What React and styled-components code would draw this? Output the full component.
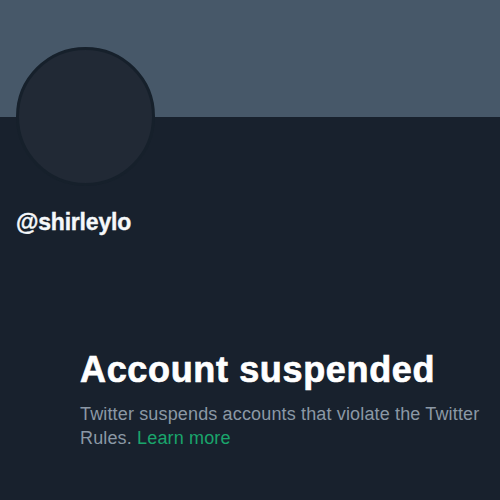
import React from "react";
import styled, { createGlobalStyle } from "styled-components";

const Global = createGlobalStyle`
  html, body { margin: 0; padding: 0; background: #18212d; }
  body { font-family: "Liberation Sans", Arial, sans-serif; }
`;

const Page = styled.div`
  width: 500px;
  height: 500px;
  background: #18212d;
  overflow: hidden;
  display: flex;
  flex-direction: column;
`;

const Banner = styled.div`
  height: 117px;
  background: #475869;
  flex-shrink: 0;
`;

const Header = styled.div`
  padding: 0 16px;
  display: flex;
  flex-direction: column;
`;

const Avatar = styled.div`
  width: 133px;
  height: 133px;
  border-radius: 50%;
  background: #212935;
  border: 3px solid #16202b;
  margin-top: -70px;
`;

const Handle = styled.div`
  margin-top: 22px;
  color: #f5f8fa;
  font-weight: 700;
  font-size: 23px;
  line-height: 28px;
  letter-spacing: -0.2px;
  -webkit-text-stroke: 0.4px #f5f8fa;
`;

const Notice = styled.div`
  padding: 114px 16px 0 80px;
  display: flex;
  flex-direction: column;
  gap: 12px;
`;

const Title = styled.h1`
  margin: 0;
  color: #ffffff;
  font-size: 36px;
  font-weight: 700;
  line-height: 40px;
  letter-spacing: 0.65px;
  -webkit-text-stroke: 0.7px #ffffff;
`;

const Body = styled.p`
  margin: 0;
  color: #8b98a5;
  font-size: 18px;
  line-height: 24px;
  letter-spacing: 0.15px;
`;

const Link = styled.a`
  color: #1aa56c;
  text-decoration: none;
`;

export default function App() {
  return (
    <Page>
      <Global />
      <Banner />
      <Header>
        <Avatar />
        <Handle>@shirleylo</Handle>
      </Header>
      <Notice>
        <Title>Account suspended</Title>
        <Body>
          Twitter suspends accounts that violate the Twitter Rules.{" "}
          <Link href="#">Learn more</Link>
        </Body>
      </Notice>
    </Page>
  );
}
